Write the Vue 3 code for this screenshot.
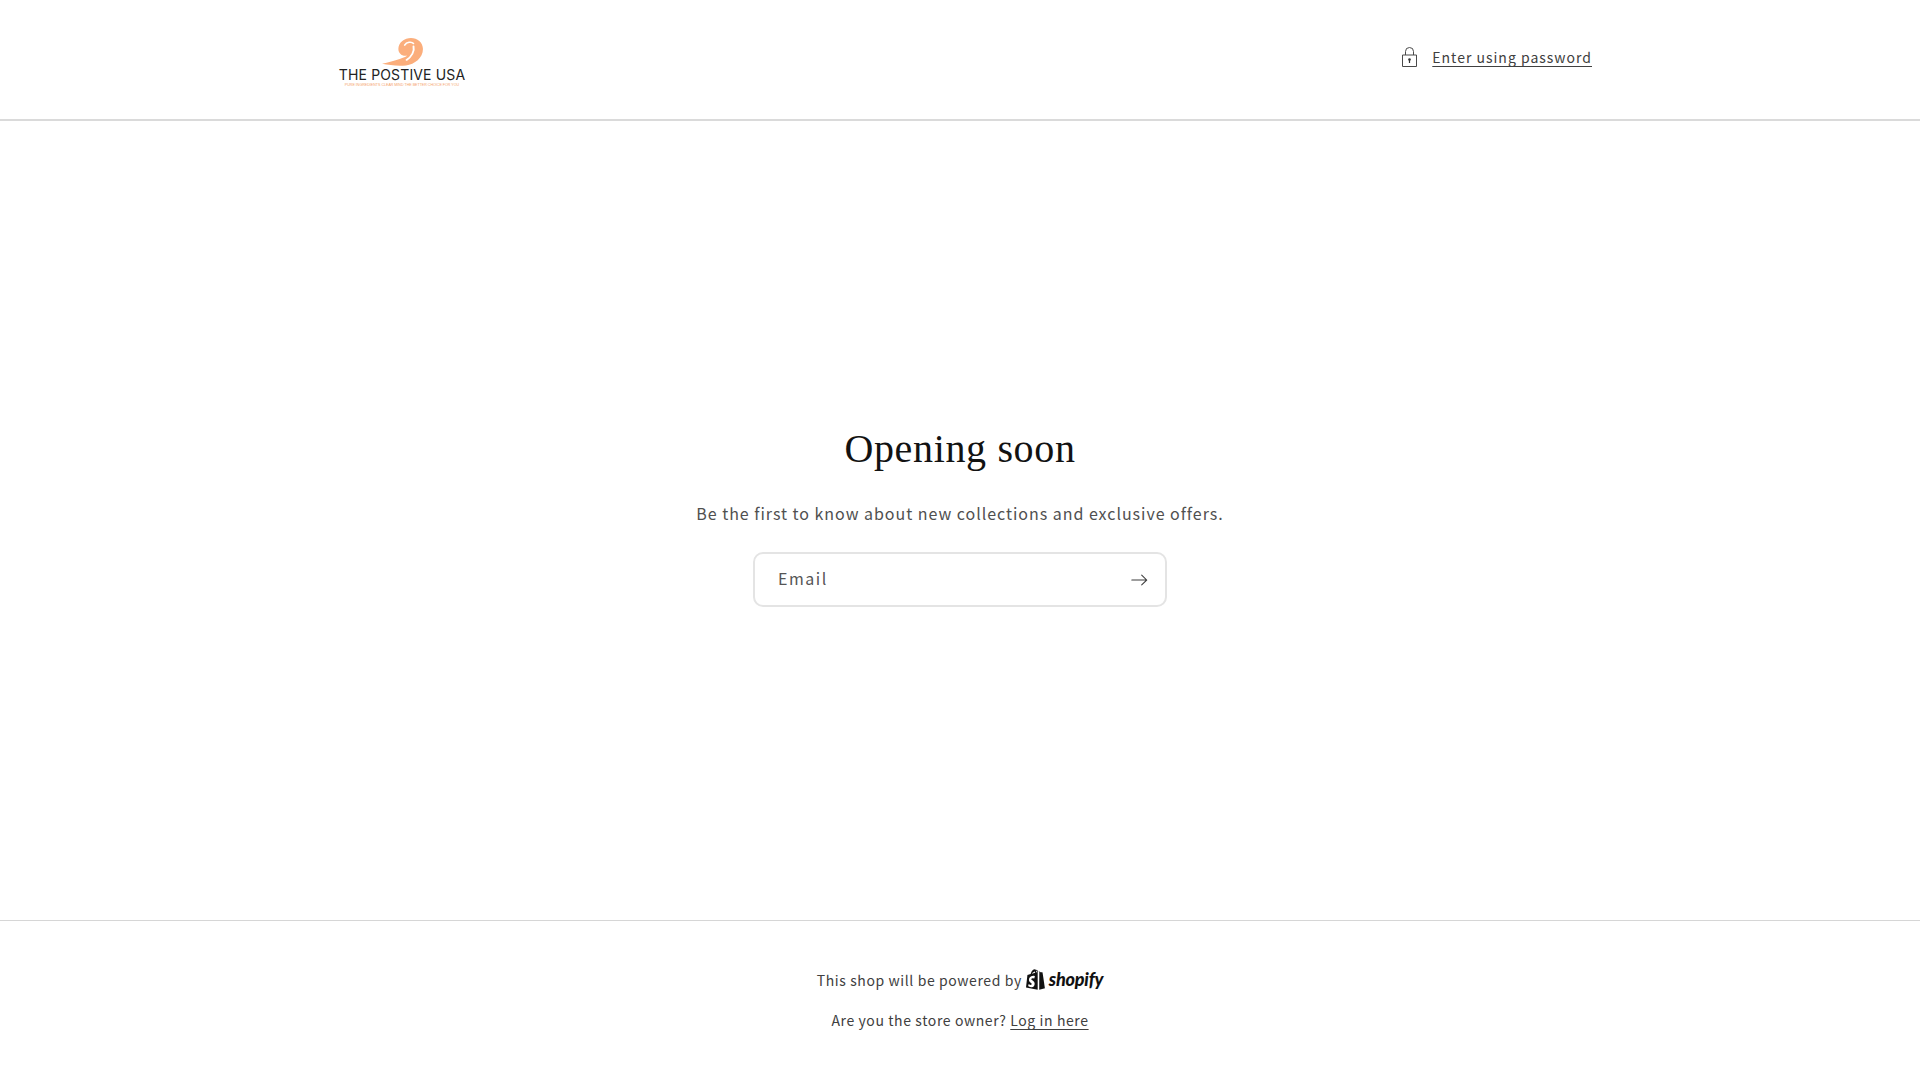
<template>
  <div class="page">
    <header class="header">
      <div class="logo">
        <svg class="wave" viewBox="0 0 50 36" width="50" height="36" aria-hidden="true">
          <g transform="translate(-2.3 .5) scale(1.26 1.1)">
            <path fill="#fbae7c" d="M5 28.500C10 27 15 25.500 19 24C22 23 24 22.500 25 21C21 22 18 19 18 15C18 9 23 5 28 5C33 5 37.500 9 37.500 15C37.500 23 31 29 24 30C17 31 11 29.500 5 28.500Z"/>
            <path fill="none" stroke="#fff" stroke-width="1.300" stroke-linecap="round" d="M23 11.500C24.500 8.500 28.500 8 30 10"/>
            <path fill="none" stroke="#fff" stroke-width="1.500" stroke-linecap="round" d="M30 12.500C31 17 28.500 22 24.500 25"/>
          </g>
        </svg>
        <div class="wordmark">THE POSTIVE USA</div>
        <div class="tagline">PURE INGREDIENTS CLEAR MIND THE BETTER CHOICE FOR YOU</div>
      </div>
      <a class="password" href="#" @click.prevent>
        <svg class="lock" viewBox="0 0 15 20" width="15" height="20" aria-hidden="true">
          <path fill="none" stroke="#4a4a4a" stroke-width="1" d="M.5 8h14v11.500H.5z"/>
          <path fill="none" stroke="#4a4a4a" stroke-width="1" d="M3.500 8V4.500a4 4 0 0 1 8 0V8"/>
          <circle cx="7.500" cy="12.500" r="1.300" fill="#333"/>
          <path stroke="#333" stroke-width="1.200" d="M7.500 12.500v3.500"/>
        </svg>
        <span class="link">Enter using password</span>
      </a>
    </header>

    <main class="main">
      <h1 class="title">Opening soon</h1>
      <p class="lead">Be the first to know about new collections and exclusive offers.</p>
      <form class="field" @submit.prevent>
        <span class="placeholder">Email</span>
        <svg class="arrow" viewBox="0 0 14 10" width="17" height="12" aria-hidden="true">
          <path fill="#3f3f3f" fill-rule="evenodd" d="M8.500.6a.45.45 0 0 1 .64 0l4.200 4.100a.45.45 0 0 1 0 .63l-4.200 4.100a.45.45 0 0 1-.63-.64l3.430-3.350H.6a.45.45 0 0 1 0-.9h11.340L8.500 1.230a.45.45 0 0 1 0-.63z"/>
        </svg>
      </form>
    </main>

    <footer class="footer">
      <div class="powered">
        <span>This shop will be powered by</span>
        <span class="shopify">
          <svg viewBox="0 0 20 23" width="19" height="22" aria-hidden="true">
            <path fill="#111" d="M13.600 2.600l-.8.3C12.400 1.600 11.700.7 10.600.7h-.3C10 .3 9.600 .1 9.200.1 6.600.2 5.300 3.500 4.900 5.200l-2.600.8c-.8.3-.8.300-.9 1L0 19.500l12.300 2.300V2.500z"/>
            <path fill="#111" d="M14 2.400l-.1 19.300L20 20.300S17.500 3.900 17.400 3.700c-.1-.2-.2-.3-.4-.3l-1.700-.1z"/>
            <path fill="#fff" d="M9.400 7.600l-.7 2.300s-.8-.4-1.700-.3c-1.400.1-1.400 1-1.400 1.200.1 1.200 3.300 1.500 3.500 4.400.1 2.300-1.200 3.800-3.200 3.900-2.300.1-3.600-1.200-3.600-1.200l.5-2.100s1.300 1 2.300.9c.7 0 .9-.6.900-.9-.1-1.600-2.700-1.500-2.900-4.200-.1-2.200 1.300-4.400 4.500-4.600 1.200-.1 1.800.6 1.800.6z"/>
            <path fill="#fff" d="M9.200 2.500C8 3 6.700 3.900 6.200 4.900l3.500-1c-.1-.6-.2-1.100-.5-1.400zM10.300 1.500c.4.500.6 1.200.7 2l1-.3c-.2-.9-.6-1.600-1.700-1.700z"/>
          </svg>
          <span class="shopify-word">shopify</span>
        </span>
      </div>
      <div class="owner">Are you the store owner? <a class="link" href="#" @click.prevent>Log in here</a></div>
    </footer>
  </div>
</template>

<script setup>
</script>

<style>
html, body { margin: 0; background: #fff; }
</style>

<style scoped>
.page {
  min-height: 1080px;
  display: flex;
  flex-direction: column;
  box-sizing: border-box;
  font-family: "Noto Sans CJK JP", "Noto Sans", sans-serif;
  color: #404040;
  letter-spacing: 0.6px;
}
.header {
  height: 119px;
  flex: none;
  border-bottom: 2px solid #dadada;
  padding: 0 328px 0 339px;
  display: flex;
  justify-content: space-between;
  align-items: flex-start;
}
.logo {
  width: 126px;
  display: flex;
  flex-direction: column;
  align-items: center;
  padding-top: 32px;
}
.wave { display: block; margin-left: 2px; filter: blur(0.3px); }
.wordmark {
  font-family: Inter, "Liberation Sans", sans-serif;
  font-size: 14px;
  font-weight: 400;
  line-height: 14px;
  letter-spacing: 0.15px;
  color: #222;
  white-space: nowrap;
}
.tagline {
  font-family: "Liberation Sans", sans-serif;
  font-size: 3.600px;
  line-height: 4px;
  letter-spacing: 0;
  color: #f5a36b;
  white-space: nowrap;
  margin-top: 1px;
}
.password {
  display: flex;
  align-items: center;
  gap: 15px;
  color: #404040;
  text-decoration: none;
  margin-top: 47px;
  font-size: 14px;
  letter-spacing: 1px;
}
.lock { flex: none; }
.link {
  color: #404040;
  text-decoration: underline;
  text-underline-offset: 3px;
  text-decoration-thickness: 1px;
}
.main {
  height: 800px;
  flex: none;
  border-bottom: 1px solid #d6d6d6;
  display: flex;
  flex-direction: column;
  align-items: center;
  box-sizing: border-box;
}
.title {
  margin: 302px 0 0;
  font-family: "Liberation Serif", serif;
  font-weight: 400;
  font-size: 40px;
  line-height: 52px;
  letter-spacing: 0.65px;
  color: #121212;
}
.lead {
  margin: 23px 0 0;
  font-size: 16px;
  line-height: 30px;
  letter-spacing: 0.97px;
  color: #505050;
}
.field {
  margin: 24px 0 0;
  width: 414px;
  height: 55px;
  box-sizing: border-box;
  border: 2px solid #e4e4e4;
  border-radius: 10px;
  display: flex;
  align-items: center;
  justify-content: space-between;
  padding: 0 18px 0 23px;
}
.placeholder {
  font-size: 16px;
  letter-spacing: 1.5px;
  color: #555;
  margin-top: -3px;
}
.arrow { flex: none; margin-top: 1px; margin-right: -1px; }
.footer {
  flex: 1;
  display: flex;
  flex-direction: column;
  align-items: center;
  padding-top: 46px;
  font-size: 14px;
  letter-spacing: 0.6px;
  color: #404040;
}
.powered {
  display: flex;
  align-items: center;
  gap: 4px;
  height: 26px;
}
.shopify {
  display: inline-flex;
  align-items: center;
  gap: 4px;
  color: #111;
}
.shopify-word {
  font-family: Lato, "Liberation Sans", sans-serif;
  font-weight: 900;
  font-style: italic;
  font-size: 18px;
  letter-spacing: -0.2px;
  line-height: 20px;
  margin-top: -2px;
}
.owner {
  margin-top: 14px;
  line-height: 26px;
}
</style>
